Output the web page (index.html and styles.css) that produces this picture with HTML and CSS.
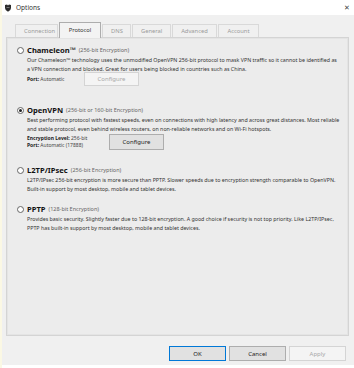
FILE: index.html
```html
<!DOCTYPE html>
<html lang="en">
<head>
    <meta charset="UTF-8">
    <title>Options</title>
    <link rel="stylesheet" href="styles.css">
</head>
<body>
    <div class="window">
        <div class="titlebar">
            <svg class="app-icon" width="8" height="8" viewBox="0 0 8 8">
                <path d="M1 1 L3 0.5 L4 1.5 L5 0.5 L7 1 L7 4 Q7 6.5 4 7.8 Q1 6.5 1 4 Z" fill="#2b2b2b"/>
                <path d="M2.5 3 L5.5 3 L5.5 4 L2.5 4 Z" fill="#777"/>
            </svg>
            <span class="title">Options</span>
            <span class="close">&#x2715;</span>
        </div>

        <div class="dialog">
            <div class="tabs">
                <div class="tab">Connection</div>
                <div class="tab active">Protocol</div>
                <div class="tab">DNS</div>
                <div class="tab">General</div>
                <div class="tab">Advanced</div>
                <div class="tab">Account</div>
            </div>

            <div class="panel">
                <!-- Chameleon -->
                <div class="option opt-chameleon">
                    <div class="option-head">
                        <span class="radio"></span>
                        <span class="name">Chameleon&trade;</span>
                        <span class="enc">(256-bit Encryption)</span>
                    </div>
                    <p class="desc">Our Chameleon&trade; technology uses the unmodified OpenVPN 256-bit protocol to mask VPN traffic so it cannot be identified as a VPN connection and blocked. Great for users being blocked in countries such as China.</p>
                    <div class="settings">
                        <div class="info">
                            <div><b>Port:</b> Automatic</div>
                        </div>
                        <button class="btn disabled">Configure</button>
                    </div>
                </div>

                <!-- OpenVPN -->
                <div class="option opt-openvpn">
                    <div class="option-head">
                        <span class="radio checked"></span>
                        <span class="name">OpenVPN</span>
                        <span class="enc">(256-bit or 160-bit Encryption)</span>
                    </div>
                    <p class="desc">Best performing protocol with fastest speeds, even on connections with high latency and across great distances. Most reliable and stable protocol, even behind wireless routers, on non-reliable networks and on Wi-Fi hotspots.</p>
                    <div class="settings">
                        <div class="info">
                            <div><b>Encryption Level:</b> 256-bit</div>
                            <div><b>Port:</b> Automatic (17888)</div>
                        </div>
                        <button class="btn">Configure</button>
                    </div>
                </div>

                <!-- L2TP -->
                <div class="option opt-l2tp">
                    <div class="option-head">
                        <span class="radio"></span>
                        <span class="name">L2TP/IPsec</span>
                        <span class="enc">(256-bit Encryption)</span>
                    </div>
                    <p class="desc">L2TP/IPsec 256-bit encryption is more secure than PPTP. Slower speeds due to encryption strength comparable to OpenVPN. Built-in support by most desktop, mobile and tablet devices.</p>
                </div>

                <!-- PPTP -->
                <div class="option opt-pptp">
                    <div class="option-head">
                        <span class="radio"></span>
                        <span class="name">PPTP</span>
                        <span class="enc">(128-bit Encryption)</span>
                    </div>
                    <p class="desc">Provides basic security. Slightly faster due to 128-bit encryption. A good choice if security is not top priority. Like L2TP/IPsec, PPTP has built-in support by most desktop, mobile and tablet devices.</p>
                </div>
            </div>

            <div class="buttons">
                <button class="btn btn-wide default">OK</button>
                <button class="btn btn-wide">Cancel</button>
                <button class="btn btn-wide disabled">Apply</button>
            </div>
        </div>
    </div>
</body>
</html>
```

FILE: styles.css
```css
body {
    margin: 0;
    font-family: 'Noto Sans', 'Open Sans', sans-serif;
    background-color: #ffffff;
    color: #222;
}

.window {
    width: 354px;
    height: 368px;
    border-left: 2px solid #fbf8e4;
    box-sizing: border-box;
}

.titlebar {
    height: 15px;
    display: flex;
    align-items: center;
    padding: 0 4px 0 2px;
    background-color: #fff;
}

.app-icon {
    margin-right: 4px;
}

.title {
    font-size: 6.5px;
    color: #333;
}

.close {
    margin-left: auto;
    font-size: 7px;
    color: #444;
}

.dialog {
    background-color: #f0f0f0;
    height: 350px;
    padding: 7px 5px 0 4px;
    box-sizing: border-box;
}

.tabs {
    display: flex;
    align-items: flex-end;
    padding-left: 9px;
    height: 15px;
}

.tab {
    height: 13px;
    box-sizing: border-box;
    border: 1px solid #d9d9d9;
    border-bottom: none;
    margin-right: 1px;
    padding: 0 8px;
    font-size: 5.8px;
    line-height: 12px;
    text-align: center;
    color: #9a9a9a;
    background-color: #f0f0f0;
}

.tab:nth-child(1) { width: 43px; }
.tab:nth-child(2) { width: 42px; }
.tab:nth-child(3) { width: 29px; }
.tab:nth-child(4) { width: 39px; }
.tab:nth-child(5) { width: 45px; }
.tab:nth-child(6) { width: 41px; }

.tab.active {
    height: 16px;
    margin-bottom: -1px;
    border-color: #adadad;
    color: #333;
    background-color: #f3f3f3;
    line-height: 15px;
    position: relative;
    z-index: 1;
}

.panel {
    height: 299px;
    box-sizing: border-box;
    border: 1px solid #d4d4d4;
    box-shadow: inset 0 0 0 1px #e4e4e4;
    background-color: #ececec;
    padding: 7px 8px 0 10px;
}

.option-head {
    display: flex;
    align-items: center;
    height: 10px;
}

.radio {
    width: 5px;
    height: 5px;
    border: 1px solid #666;
    border-radius: 50%;
    background-color: #fff;
    margin-right: 3px;
    position: relative;
}

.radio.checked::after {
    content: "";
    position: absolute;
    left: 1px;
    top: 1px;
    width: 3px;
    height: 3px;
    border-radius: 50%;
    background-color: #222;
}

.name {
    font-size: 7.6px;
    font-weight: bold;
    color: #111;
    margin-right: 3px;
}

.enc {
    font-size: 5.5px;
    color: #666;
}

.desc {
    margin: 1px 0 0 10px;
    font-size: 5.3px;
    line-height: 8.5px;
    color: #333;
}

.settings {
    display: flex;
    align-items: center;
    margin: 0 0 0 10px;
}

.info {
    width: 57px;
    font-size: 5px;
    line-height: 7px;
    color: #444;
}

.opt-openvpn .info {
    width: 82px;
}

.info b {
    color: #222;
}

.btn {
    font-family: inherit;
    font-size: 6px;
    color: #222;
    background-color: #e1e1e1;
    border: 1px solid #adadad;
    height: 15px;
    width: 55px;
    padding: 0;
}

.settings .btn {
    height: 14px;
}

.opt-openvpn .settings .btn {
    height: 16px;
}

.btn.disabled {
    color: #a8a8a8;
    background-color: #f4f4f4;
    border-color: #d4d4d4;
}

.opt-chameleon .settings {
    margin-top: -1px;
}

.opt-openvpn {
    margin-top: 19px;
}

.opt-openvpn .settings {
    margin-top: 1px;
}

.opt-l2tp {
    margin-top: 15px;
}

.opt-pptp {
    margin-top: 11px;
}

.buttons {
    display: flex;
    justify-content: flex-end;
    gap: 3px;
    margin-top: 10px;
    padding-right: 3px;
}

.btn-wide {
    width: 57px;
}

.btn.default {
    border-color: #0078d7;
}
```
